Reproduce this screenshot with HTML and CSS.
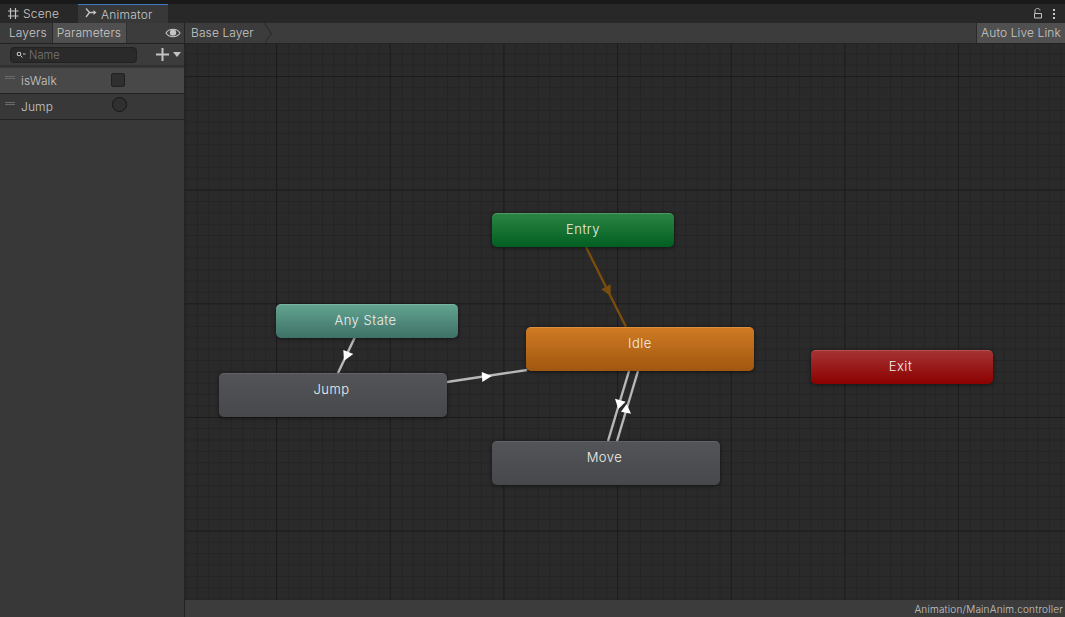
FILE: index.html
```html
<!DOCTYPE html>
<html>

	<head>
		<meta charset="UTF-8">
		<title>Animator</title>
		<link rel="stylesheet" href="styles.css">
	</head>

	<body>
		<div id="tabs">
			<div class="tab">
				<svg class="tab-icon" width="14" height="14" viewBox="0 0 14 14"><path d="M4.5 1v11M9.5 1v11M2 4h10.5M2 9h10.5" stroke="#c4c4c4" stroke-width="1.2" fill="none"/></svg>
				Scene
			</div>
			<div class="tab active">
				<svg class="tab-icon" width="14" height="14" viewBox="0 0 14 14"><path d="M2 1.5l3.5 4h5.5M2 10l3.5-4.5" stroke="#c4c4c4" stroke-width="1.3" fill="none"/><path d="M9.5 3l3 2.5-3 2.5z" fill="#c4c4c4"/></svg>
				Animator
			</div>
			<div class="tab-tools">
				<svg width="10" height="13" viewBox="0 0 10 13"><path d="M1.5 6.5h7v4.5h-7z" stroke="#c4c4c4" fill="none"/><path d="M2 6V3.5C2 .8 7 .8 7 3.5" stroke="#c4c4c4" fill="none"/></svg>
				<svg width="4" height="12" viewBox="0 0 4 12"><path d="M1 1h2v2H1zM1 5h2v2H1zM1 9h2v2H1z" fill="#c4c4c4"/></svg>
			</div>
		</div>

		<div id="main">
			<div id="side">
				<div class="side-tools">
					<div class="btn">Layers</div>
					<div class="btn">Parameters</div>
					<svg class="eye" width="16" height="10" viewBox="0 0 16 10"><path d="M1 5c3-5 11-5 14 0-3 5-11 5-14 0z" fill="none" stroke="#c4c4c4" stroke-width="1.1"/><circle cx="8" cy="4.6" r="3.2" fill="#c4c4c4"/></svg>
				</div>
				<div class="search-row">
					<div class="search">
						<svg width="10" height="8" viewBox="0 0 10 8"><circle cx="3" cy="3" r="1.8" fill="none" stroke="#c4c4c4" stroke-width="1.1"/><path d="M4.5 4.5l2 2M7 3h2.5" stroke="#c4c4c4"/></svg>
						<span>Name</span>
					</div>
					<svg class="plus" width="13" height="13" viewBox="0 0 13 13"><path d="M6.5 0v13M0 6.5h13" stroke="#c4c4c4" stroke-width="2"/></svg>
					<svg class="caret" width="8" height="5" viewBox="0 0 8 5"><path d="M0 0h8L4 5z" fill="#c4c4c4"/></svg>
				</div>
				<ul id="params">
					<li class="selected">
						<i class="grip"></i>
						<span class="name">isWalk</span>
						<i class="check"></i>
					</li>
					<li>
						<i class="grip"></i>
						<span class="name">Jump</span>
						<i class="radio"></i>
					</li>
				</ul>
			</div>

			<div id="graph">
				<div class="crumbs">
					<div class="crumb">Base Layer</div>
					<div class="live">Auto Live Link</div>
				</div>
				<div id="canvas">
					<svg class="links" width="880" height="556" viewBox="185 44 880 556">
						<g stroke="#7a4d0c" stroke-width="2.4" fill="#7a4d0c">
							<path d="M586 247L626 327"/>
							<path stroke="none" d="M601.3 289.3L610.7 284.3L610.6 296z"/>
						</g>
						<g stroke="#b8b8b8" stroke-width="2.4" fill="#fff">
							<path d="M355 337L338 373"/>
							<path d="M447 382L527 370"/>
							<path d="M629 371L608 441"/>
							<path d="M638 371L617 441"/>
							<path stroke="none" d="M343.3 350L353.3 354L344 360.8z"/>
							<path stroke="none" d="M481.7 372L491.8 376L482.3 382z"/>
							<path stroke="none" d="M615 398.7L625.7 401.7L618.3 409z"/>
							<path stroke="none" d="M621 411.7L631 413.7L626.7 404z"/>
						</g>
					</svg>
					<div class="node small entry">Entry</div>
					<div class="node small any">Any State</div>
					<div class="node small exit">Exit</div>
					<div class="node big idle">Idle</div>
					<div class="node big jump">Jump</div>
					<div class="node big move">Move</div>
				</div>
				<div class="status">Animation/MainAnim.controller</div>
			</div>
		</div>
	</body>

</html>
```

FILE: styles.css
```css
body, ul {
	padding: 0;
	margin: 0;
}
li {
	list-style: none;
}
body {
	width: 1065px;
	height: 617px;
	overflow: hidden;
	display: flex;
	flex-direction: column;
	background-color: #191919;
	font-family: Inter, "Liberation Sans", sans-serif;
	font-size: 12px;
	font-weight: 300;
	letter-spacing: 0.1px;
	color: #c8c8c8;
}

/* tab strip */
#tabs {
	height: 19px;
	margin-top: 4px;
	display: flex;
	background-color: #282828;
}
.tab {
	width: 78px;
	display: flex;
	align-items: center;
	gap: 3px;
	padding-left: 6px;
	box-sizing: border-box;
	letter-spacing: 0.2px;
}
.tab.active {
	width: 90px;
	background-color: #383838;
	border-top: 1px solid #3a79bb;
}
.tab-icon {
	flex: none;
}
.tab-tools {
	margin-left: auto;
	display: flex;
	align-items: center;
	gap: 9px;
	padding-right: 9px;
}

#main {
	flex: 1;
	display: flex;
	min-height: 0;
}

/* parameters panel */
#side {
	width: 184px;
	background-color: #383838;
	border-right: 1px solid #232323;
}
.side-tools {
	height: 20px;
	display: flex;
	padding-left: 4px;
	align-items: stretch;
	background-color: #3c3c3c;
	border-bottom: 1px solid #232323;
}
.btn {
	padding: 0 5px;
	line-height: 20px;
	border-right: 1px solid #2a2a2a;
}
.btn + .btn {
	padding: 0 5px 0 4px;
	background-color: #505050;
	border-right: 1px solid #303030;
}
.eye {
	margin: 5px 3px 0 auto;
}
.search-row {
	height: 21px;
	display: flex;
	align-items: center;
	padding-left: 10px;
	background-color: #3c3c3c;
	box-shadow: 0 1px 2px #2c2c2c;
	position: relative;
}
.search {
	width: 127px;
	height: 16px;
	box-sizing: border-box;
	display: flex;
	align-items: center;
	gap: 3px;
	padding-left: 5px;
	background-color: #2a2a2a;
	border: 1px solid #212121;
	border-radius: 4px;
	font-size: 11px;
	color: #777;
}
.plus {
	margin-left: 19px;
}
.caret {
	margin-left: 4px;
}
#params {
	margin-top: 3px;
}
#params li {
	height: 25px;
	display: flex;
	align-items: center;
	position: relative;
	border-bottom: 1px solid #232323;
}
#params li.selected {
	background-color: #484848;
}
.grip {
	width: 10px;
	height: 1px;
	margin: -7px 0 0 5px;
	border-top: 1px solid #6a6a6a;
	border-bottom: 1px solid #6a6a6a;
}
.name {
	margin-left: 6px;
	width: 90px;
}
.check {
	width: 14px;
	height: 14px;
	box-sizing: border-box;
	margin: -1px 0 0 0;
	background-color: #2f2f2f;
	border: 1px solid #222;
	border-radius: 2px;
}
.radio {
	width: 15px;
	height: 15px;
	box-sizing: border-box;
	margin: -4px 0 0 1px;
	background-color: #303030;
	border: 1px solid #161616;
	border-radius: 50%;
}

/* graph area */
#graph {
	flex: 1;
	display: flex;
	flex-direction: column;
	min-width: 0;
}
.crumbs {
	height: 21px;
	display: flex;
	justify-content: space-between;
	background-color: #3c3c3c;
	border-bottom: 1px solid #232323;
	box-sizing: border-box;
}
.crumb {
	padding: 0 14px 0 6px;
	line-height: 20px;
	position: relative;
}
.crumb::after {
	content: "";
	position: absolute;
	right: -4px;
	top: 3px;
	width: 14px;
	height: 14px;
	border-top: 1px solid #262626;
	border-right: 1px solid #262626;
	transform: scaleX(0.7) rotate(45deg);
}
.live {
	width: 88px;
	text-align: center;
	line-height: 20px;
	background-color: #505050;
	border-left: 1px solid #2a2a2a;
}
#canvas {
	flex: 1;
	position: relative;
	background-color: #2a2a2a;
	background-image:
		linear-gradient(to right, #1c1c1c 1px, transparent 1px),
		linear-gradient(to bottom, #1c1c1c 1px, transparent 1px),
		linear-gradient(to right, #242424 1px, transparent 1px),
		linear-gradient(to bottom, #242424 1px, transparent 1px);
	background-size: 113.67px 113.67px, 113.67px 113.67px, 11.367px 11.367px, 11.367px 11.367px;
	background-position: 91px 32px, 91px 32px, 0.7px 9.3px, 0.7px 9.3px;
}
.links {
	position: absolute;
	left: 0;
	top: 0;
}
.status {
	height: 17px;
	line-height: 18px;
	text-align: right;
	padding-right: 2px;
	font-size: 10px;
	letter-spacing: 0.2px;
	background-color: #3c3c3c;
}

/* state nodes */
.node {
	position: absolute;
	box-sizing: border-box;
	border-radius: 5px;
	text-align: center;
	color: #f0f0f0;
	font-size: 13px;
	letter-spacing: 0.5px;
	padding-right: 3px;
	box-shadow: 0 1px 4px rgba(0, 0, 0, 0.5);
}
.node.small {
	width: 182px;
	height: 34px;
	line-height: 31px;
}
.node.big {
	width: 228px;
	height: 44px;
	line-height: 30px;
}
.entry {
	left: 307px;
	top: 169px;
	padding-right: 0;
	background: linear-gradient(#2b8443, #015f21);
	border-top: 1px solid #4f9a64;
}
.any {
	left: 91px;
	top: 260px;
	background: linear-gradient(#62a38f, #3e7067);
	border-top: 1px solid #7ab3a2;
}
.exit {
	left: 626px;
	top: 306px;
	background: linear-gradient(#a53232, #8c0000);
	border-top: 1px solid #b85050;
}
.idle {
	left: 341px;
	top: 283px;
	padding-right: 0;
	background: linear-gradient(#cf7a23, #a0570f);
	border-top: 1px solid #dc9040;
}
.jump {
	left: 34px;
	top: 329px;
	background: linear-gradient(#525457, #47484b);
	border-top: 1px solid #626366;
}
.move {
	left: 307px;
	top: 397px;
	background: linear-gradient(#525457, #47484b);
	border-top: 1px solid #626366;
}
```
